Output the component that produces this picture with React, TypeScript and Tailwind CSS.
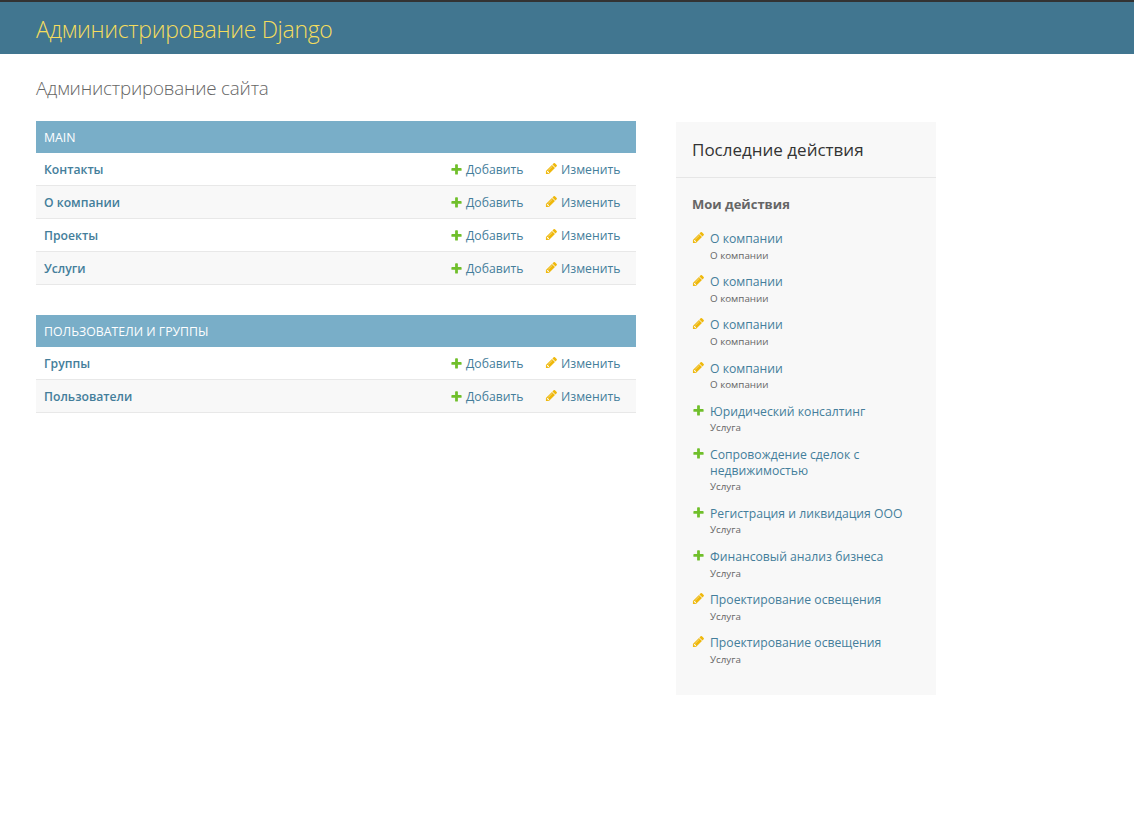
import React from 'react';

const PlusIcon = () => (
  <svg width="13" height="13" viewBox="0 0 1792 1792" className="shrink-0">
    <path
      fill="#70bf2b"
      d="M1600 796v192q0 40-28 68t-68 28h-416v416q0 40-28 68t-68 28h-192q-40 0-68-28t-28-68v-416h-416q-40 0-68-28t-28-68v-192q0-40 28-68t68-28h416v-416q0-40 28-68t68-28h192q40 0 68 28t28 68v416h416q40 0 68 28t28 68z"
    />
  </svg>
);

const PencilIcon = () => (
  <svg width="13" height="13" viewBox="0 0 1792 1792" className="shrink-0">
    <path
      fill="#efb80b"
      d="M491 1536l91-91-235-235-91 91v107h128v128h107zm523-928q0-22-22-22-10 0-17 7l-542 542q-7 7-7 17 0 22 22 22 10 0 17-7l542-542q7-7 7-17zm-54-192l416 416-832 832h-416v-416zm683 96q0 53-37 90l-166 166-416-416 166-165q36-38 90-38 53 0 91 38l235 234q37 39 37 91z"
    />
  </svg>
);

interface Module {
  title: string;
  models: string[];
}

const modules: Module[] = [
  { title: 'Main', models: ['Контакты', 'О компании', 'Проекты', 'Услуги'] },
  { title: 'Пользователи и группы', models: ['Группы', 'Пользователи'] },
];

type Action = { kind: 'add' | 'change'; name: string; type: string };

const actions: Action[] = [
  { kind: 'change', name: 'О компании', type: 'О компании' },
  { kind: 'change', name: 'О компании', type: 'О компании' },
  { kind: 'change', name: 'О компании', type: 'О компании' },
  { kind: 'change', name: 'О компании', type: 'О компании' },
  { kind: 'add', name: 'Юридический консалтинг', type: 'Услуга' },
  { kind: 'add', name: 'Сопровождение сделок с недвижимостью', type: 'Услуга' },
  { kind: 'add', name: 'Регистрация и ликвидация ООО', type: 'Услуга' },
  { kind: 'add', name: 'Финансовый анализ бизнеса', type: 'Услуга' },
  { kind: 'change', name: 'Проектирование освещения', type: 'Услуга' },
  { kind: 'change', name: 'Проектирование освещения', type: 'Услуга' },
];

const App: React.FC = () => {
  return (
    <div className="min-h-[839px] bg-white font-['Open_Sans',sans-serif] text-[#333]">
      {/* Header */}
      <div className="border-t-2 border-[#333] bg-[#417690]">
        <div className="h-[52px] flex items-center px-[36px] pt-[3px]">
          <h1 className="text-[23px] font-light text-[#f5dd5d] tracking-[-0.3px]">Администрирование Django</h1>
        </div>
      </div>

      {/* Content */}
      <div className="px-[36px] pt-[20px]">
        <h1 className="text-[18.8px] font-light leading-[28px] text-[#666] mb-[19px] tracking-[-0.2px]">Администрирование сайта</h1>

        <div className="flex items-start gap-[40px]">
          <div className="w-[600px] shrink-0">
            {modules.map((m) => (
              <div key={m.title} className="mb-[30px]">
                <div className="bg-[#79aec8] text-white text-[12.3px] leading-4 px-2 pt-[9px] pb-[7px] uppercase">{m.title}</div>
                {m.models.map((name, i) => (
                  <div
                    key={name}
                    className={`flex items-center border-b border-[#e8e8e8] text-[12.2px] leading-4 ${i % 2 === 1 ? 'bg-[#f8f8f8]' : 'bg-white'}`}
                  >
                    <div className="flex-1 px-2 pt-[9px] pb-[7px] font-semibold text-[#447e9b]">{name}</div>
                    <div className="w-[96px] pt-[9px] pb-[7px] flex items-center gap-[3px] text-[#447e9b]">
                      <span className="-mt-[2px]"><PlusIcon /></span>
                      <span>Добавить</span>
                    </div>
                    <div className="w-[90px] pt-[9px] pb-[7px] flex items-center gap-[3px] text-[#447e9b]">
                      <span className="-mt-[3px] -ml-[1px]"><PencilIcon /></span>
                      <span>Изменить</span>
                    </div>
                  </div>
                ))}
              </div>
            ))}
          </div>

          {/* Sidebar */}
          <div className="w-[260px] shrink-0 mt-[1px] bg-[#f8f8f8] pb-[18px]">
            <h2 className="px-4 py-4 text-[17px] leading-[23px] text-[#333] border-b border-[#e6e6e6]">Последние действия</h2>
            <h3 className="mx-4 mt-4 text-[13px] leading-5 font-bold text-[#666]">Мои действия</h3>
            <ul className="mx-4 mt-[16px]">
              {actions.map((a, i) => (
                <li key={i} className="relative pl-[18px] py-px mb-[10px] text-[12.2px] leading-[15.6px]">
                  <span className="absolute left-0 top-[1px]">{a.kind === 'add' ? <PlusIcon /> : <PencilIcon />}</span>
                  <span className="text-[#447e9b]">{a.name}</span>
                  <span className="block relative top-[1px] text-[9.8px] text-[#666]">{a.type}</span>
                </li>
              ))}
            </ul>
          </div>
        </div>
      </div>
    </div>
  );
};

export default App;
